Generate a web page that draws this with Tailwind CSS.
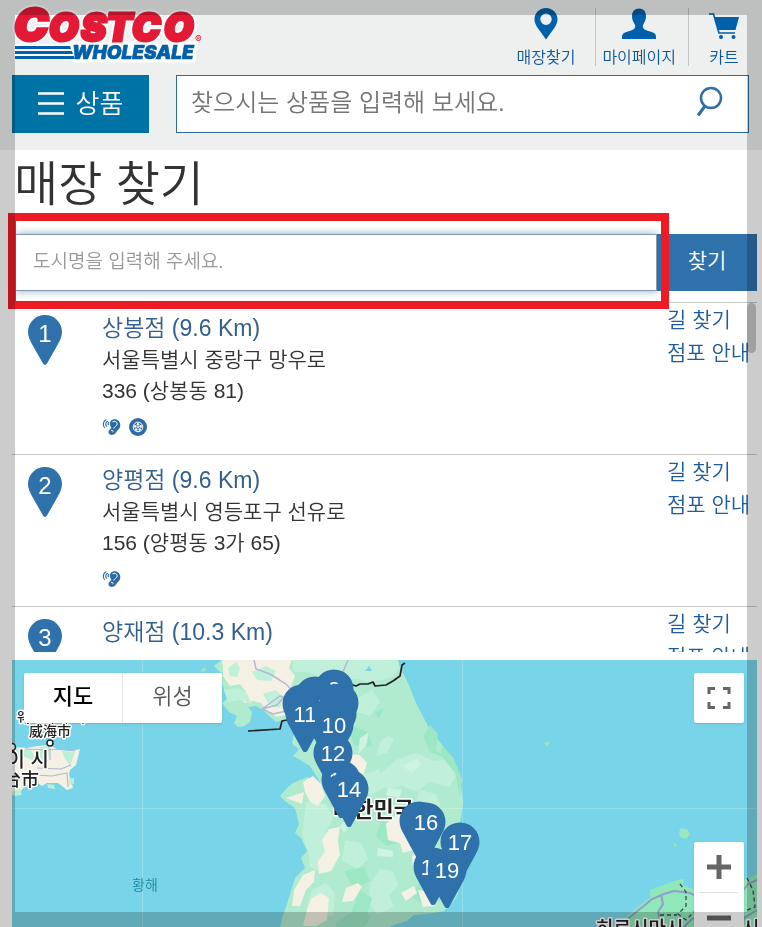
<!DOCTYPE html>
<html lang="ko">
<head>
    <meta charset="UTF-8">
    <meta name="viewport" content="width=device-width, initial-scale=1.0">
    <title>매장 찾기</title>
    <script src="https://cdn.jsdelivr.net/npm/@tailwindcss/browser@4"></script>
</head>
<body class="h-screen flex flex-col overflow-hidden bg-white text-[#333] font-[350] font-['Liberation_Sans','Noto_Sans_CJK_KR',sans-serif]">
    <svg class="hidden" aria-hidden="true">
        <symbol id="pin" viewBox="0 0 34 50">
            <path fill="#2f71aa" d="M17 0C7.600 0 0 7.500 0 17c0 4.500 2 8.500 4.500 13L15 48.500c1 1.900 3 1.900 4 0L29.500 30C32 25.500 34 21.500 34 17 34 7.500 26.400 0 17 0z"/>
        </symbol>
        <symbol id="map-pin" viewBox="-20 -20 40 60">
            <path fill="#2f71aa" d="M0-19.500C-11-19.500-19.500-11-19.500 0c0 5 2 9 4.500 13.500L-2.500 36.500c1 2 4 2 5 0L15 13.500C17.500 9 19.500 5 19.500 0 19.500-11 11-19.500 0-19.500z"/>
        </symbol>
        <symbol id="ear" viewBox="0 0 20 18">
            <g fill="none" stroke="#2f6ca5" stroke-width="1.200">
                <path d="M3 10C.3 7 1 3 4.500 1.200M5 8.500C3.200 6.500 3.600 4 6.200 2.600M7 7C6 6 6.200 4.800 7.500 4"/>
            </g>
            <path fill="#2f6ca5" d="M9 3c2-2.700 6.500-2.800 8.700-.3 2.500 3 1.800 7-.7 9.300-1.800 1.700-2.500 4.200-4.700 5-2.800 1-5.800-.3-5.400-3 .3-2 2-2.400 2.900-4.400C8.600 8 7.500 5.300 9 3z"/>
            <path fill="none" stroke="#fff" stroke-width="1" d="M11 3.600c2-1.300 4.800-.5 5 1.900.2 2.600-3 3-3.700 5.200M9.500 12.500c1.800-.3 2.700.7 1.800 2"/>
        </symbol>
        <symbol id="tire" viewBox="0 0 18 18">
            <circle cx="9" cy="9" r="9" fill="#2f6ca5"/>
            <circle cx="9" cy="9" r="4.800" fill="none" stroke="#fff" stroke-width="1"/>
            <g fill="#fff"><circle cx="9" cy="6.300" r="1.300"/><circle cx="6.300" cy="8.400" r="1.300"/><circle cx="11.700" cy="8.400" r="1.300"/><circle cx="7.300" cy="11.500" r="1.300"/><circle cx="10.700" cy="11.500" r="1.300"/><circle cx="9" cy="9" r="1"/></g>
        </symbol>
    </svg>

    <header class="bg-[#eeefef] pl-3 pr-[13px] h-[150px] shrink-0">
        <div class="flex justify-between items-start pt-1 h-[75px]">
            <a href="#" aria-label="Costco Wholesale">
                <svg class="w-[194px] h-[60px] font-['Inter'] font-black italic" viewBox="12 4 194 60">
                    <g fill="#fff" stroke="#fff" stroke-width="7" stroke-linejoin="round">
                        <use href="#wordmark"/>
                        <use href="#subline"/>
                    </g>
                    <path fill="#fff" d="M14 44h58l4 16H14z"/>
                    <g fill="#e31936" stroke="#e31936" stroke-width="3">
                        <g id="wordmark">
                            <text x="14" y="41" font-size="46">C</text>
                            <text x="49" y="41" font-size="38">O</text>
                            <text x="81" y="41" font-size="38">S</text>
                            <text x="106" y="41" font-size="38">T</text>
                            <text x="132" y="41" font-size="38">C</text>
                            <text x="164" y="41" font-size="38">O</text>
                        </g>
                    </g>
                    <g fill="#0060a9" stroke="#0060a9" stroke-width=".6">
                        <text id="subline" x="72" y="59" font-size="19">WHOLESALE</text>
                    </g>
                    <path fill="#0060a9" d="M15 46h55l1 3H15zM15 51h57l1 3H15zM15 56h59l1 3H15z"/>
                    <text x="195" y="43" font-size="10" fill="#e31936" class="font-normal not-italic">®</text>
                </svg>
            </a>
            <nav class="flex pt-1 pr-2.5 text-base leading-6 text-[#0d5699]">
                <a href="#" class="flex flex-col items-center gap-2 pr-5 h-[58px]">
                    <svg class="w-6 h-8 shrink-0" viewBox="0 0 24 32"><path fill="#0060a9" fill-rule="evenodd" d="M12 0C5.500 0 .5 5 .5 11.200c0 3 1.200 5.300 2.500 7.800l9 12.500L21 19c1.300-2.500 2.500-4.800 2.500-7.800C23.500 5 18.500 0 12 0zm0 5.500a5.700 5.700 0 1 1 0 11.400 5.700 5.700 0 0 1 0-11.400z"/></svg>
                    <span class="leading-5">매장찾기</span>
                </a>
                <a href="#" class="flex flex-col items-center gap-2 pl-1.5 pr-3 h-[58px] border-x border-[#c4c5c6]">
                    <svg class="w-[34px] h-8 shrink-0" viewBox="0 0 34 32"><path fill="#0060a9" d="M17 .5c-4.500 0-7 3-7 7.500 0 3 .8 5 2.300 7.500 1.500 2.500 1.200 5-1.300 6.200-3.500 1.500-7 1.800-9.300 3.500C.3 26.200 0 27.500 0 29v2h34v-2c0-1.500-.3-2.800-1.700-3.800-2.300-1.700-5.800-2-9.300-3.500-2.500-1.200-2.800-3.700-1.300-6.200C23.200 13 24 11 24 8c0-4.500-2.500-7.500-7-7.500z"/></svg>
                    <span class="leading-5">마이페이지</span>
                </a>
                <a href="#" class="flex flex-col items-center gap-2 pl-5 h-[58px]">
                    <svg class="w-[30px] h-8 shrink-0" viewBox="0 0 30 32"><path fill="none" stroke="#0060a9" stroke-width="1.700" d="M0 6h4.500L10 25h16"/><path fill="#0060a9" d="M5.500 9H30l-3.500 13H9z"/><circle cx="12" cy="29" r="2" fill="#0060a9"/><circle cx="24.500" cy="29" r="2" fill="#0060a9"/></svg>
                    <span class="leading-5">카트</span>
                </a>
            </nav>
        </div>
        <div class="flex gap-[27px] h-[58px]">
            <button class="w-[137px] bg-[#0073a6] text-white text-[26px] flex items-center justify-center gap-3">
                <svg class="w-[26px] h-6" viewBox="0 0 26 24"><path stroke="#fff" stroke-width="2.500" d="M0 1.500h26M0 11.500h26M0 21.500h26"/></svg>
                상품
            </button>
            <form class="flex flex-1 bg-white border border-[#2e6a98]">
                <input class="flex-1 min-w-0 px-3.5 pb-0.5 text-2xl placeholder:text-[#757575] outline-none" type="text" aria-label="상품 검색" placeholder="찾으시는 상품을 입력해 보세요.">
                <button type="button" class="px-6 pb-1" aria-label="검색">
                    <svg class="w-[28px] h-[32px]" viewBox="0 0 28 32"><g fill="none" stroke="#2f6ea8" stroke-width="2.500"><circle cx="15" cy="12" r="10"/><path stroke-width="3" d="M9 20L2 29.500"/></g></svg>
                </button>
            </form>
        </div>
    </header>

    <main class="flex flex-col flex-1 min-h-0 pl-3 pr-[5px]">
        <h1 class="h-[84px] pl-0.5 pt-0.5 text-[48px] leading-[66px]">매장 찾기</h1>
        <form class="relative z-10 flex h-[57px] shrink-0">
            <input class="flex-1 min-w-0 ml-[3px] px-[17px] text-[19px] bg-white border border-[#8b9aa8] shadow-[0_0_8px_#7fa9cc] placeholder:text-[#999] outline-none" type="text" aria-label="도시명" placeholder="도시명을 입력해 주세요.">
            <button type="button" class="w-[100px] pb-1 bg-[#2f71aa] text-white text-[21px]">찾기</button>
            <div class="absolute -left-1 right-[88px] -top-[21px] -bottom-[18px] border-8 border-[#ed1c24] pointer-events-none"></div>
        </form>

        <div class="relative mt-[11px] h-[350px] shrink-0 overflow-hidden">
            <ul>
                <li class="flex h-[152px] border-t border-[#c8c8c8] pl-4">
                    <div class="relative mt-3 w-[34px] h-[50px] text-center text-2xl leading-[38px] text-white">
                        <svg class="absolute inset-0 w-full h-full"><use href="#pin"/></svg>
                        <span class="relative">1</span>
                    </div>
                    <div class="ml-10 pt-2.5 flex-1 text-[21px] leading-[31px]">
                        <h2><a href="#" class="text-[23px] text-[#33608c]">상봉점 (9.6 Km)</a></h2>
                        <p>서울특별시 중랑구 망우로<br>336 (상봉동 81)</p>
                        <div class="flex gap-2 mt-3">
                            <svg class="w-[19px] h-[18px]"><use href="#ear"/></svg>
                            <svg class="w-[18px] h-[18px]"><use href="#tire"/></svg>
                        </div>
                    </div>
                    <div class="w-[90px] flex flex-col text-[21px] leading-[33px] text-[#1c5c9c]">
                        <a href="#">길 찾기</a>
                        <a href="#">점포 안내</a>
                    </div>
                </li>
                <li class="flex h-[152px] border-t border-[#c8c8c8] pl-4">
                    <div class="relative mt-3 w-[34px] h-[50px] text-center text-2xl leading-[38px] text-white">
                        <svg class="absolute inset-0 w-full h-full"><use href="#pin"/></svg>
                        <span class="relative">2</span>
                    </div>
                    <div class="ml-10 pt-2.5 flex-1 text-[21px] leading-[31px]">
                        <h2><a href="#" class="text-[23px] text-[#33608c]">양평점 (9.6 Km)</a></h2>
                        <p>서울특별시 영등포구 선유로<br>156 (양평동 3가 65)</p>
                        <div class="flex gap-2 mt-3">
                            <svg class="w-[19px] h-[18px]"><use href="#ear"/></svg>
                        </div>
                    </div>
                    <div class="w-[90px] flex flex-col text-[21px] leading-[33px] text-[#1c5c9c]">
                        <a href="#">길 찾기</a>
                        <a href="#">점포 안내</a>
                    </div>
                </li>
                <li class="flex h-[152px] border-t border-[#c8c8c8] pl-4">
                    <div class="relative mt-3 w-[34px] h-[50px] text-center text-2xl leading-[38px] text-white">
                        <svg class="absolute inset-0 w-full h-full"><use href="#pin"/></svg>
                        <span class="relative">3</span>
                    </div>
                    <div class="ml-10 pt-2.5 flex-1 text-[21px] leading-[31px]">
                        <h2><a href="#" class="text-[23px] text-[#33608c]">양재점 (10.3 Km)</a></h2>
                    </div>
                    <div class="w-[90px] flex flex-col text-[21px] leading-[33px] text-[#1c5c9c]">
                        <a href="#">길 찾기</a>
                        <a href="#">점포 안내</a>
                    </div>
                </li>
            </ul>
            <div class="absolute right-px top-px w-[9px] h-[50px] rounded-full bg-[#c9c9c9] mix-blend-multiply"></div>
        </div>

        <section class="relative mt-2 flex-1 min-h-0 overflow-hidden bg-[#78d4e8]">
            <svg class="w-full h-full font-['Noto_Sans_CJK_KR',sans-serif]" viewBox="12 660 745 267" preserveAspectRatio="xMidYMid slice">
                <!-- Korean peninsula -->
                <path fill="#b0ebcf" d="M222 660l-8 6 7 7 1 10 2 7 4 8-6 5 7 9 8 4-3 7 4 4 6-1 6-4 2-10-4-5 8-1 8 5 12 11 10-3 8 14-2 11 7 5-6 7 9 5 8 5 4 6 6 10-2 3-10-8-8 3-7 3-5 4-8 9 5 5 10 7 4 16-4 9 6 5 6 13-6 7 4 10-10 10-3 10-5 16-5 14-2 10h107l10-4 10-3 7-6 13-1 17-3 10-10 4-7 2-11v-60l3-20-2-17-5-17-13-23-14-18-13-25-8-20-7-14v-3z"/>
                <path fill="#f4f0e4" d="M222 660h70l-3 8 6 8-4 10 3 12-5 16-12 3-10-6-6-8-8-2-8 2-7-6 8-5-6-8-10 2-7-10 0-9z"/>
                <path fill="#c1f0da" d="M228 668l8-6 4 6-3 9-7-1zM252 672l14-6 10 5-5 10-14-1zM224 690l14-2 9 6 5 10-11-4-13 2zM263 694l12-4 8 6-3 12-11-3z"/>
                <path fill="#c1f0da" d="M292 660h106l2 8-9 10-21 4-14-3-30 1-18-8-14 0zM358 698l14-8 8 12-10 14-12-4zM380 742l8-6 6 3-7 14-11 3zM396 760l20-7 18 8 16-2 8 15-9 13-20-5-12 10-16-7-12 5-14-12zM352 768l14 6 13-5 6 18-13 8-18-10zM306 802l20 2 7 14-8 15 8 18-9 22-14-6-2-16-6-16zM371 882l9-13 13 2 5 14-9 11 5 10-17 9-9-14zM312 890l14-7 9 10-2 22-15 4-12-10zM420 790l16 4 5 12-14 7-12-10zM345 840l16 3 7 16-10 10-16-8z"/>
                <path fill="#9ce8c5" d="M375 713l9-5-5 11zM347 724l22 8 3 15-18-2zM382 820l18 8 2 14-16 4-10-10zM344 871l20-4 6 14-16 8zM420 880l14 5 8 14-14 8-16-10zM430 725l8 9-2 16 10 8-16-6-7-16zM360 890l12 8-5 16-16 0zM336 922l20-12 16 6-8 11h-28zM442 745l12 14 8 20-2 18-5-24-14-18z"/>
                <path fill="#cdf3e1" d="M360 738l9-6-3 14-8 8zM403 766l14-8 4 7-10 8zM388 788l14 2-3 8-13-3zM340 826l7-8 2 8-5 7zM378 848l15 3 0 6-16-1z"/>
                <path fill="#f4f0e4" d="M350 754l10 1 7 8-3 10-10 2-6-10zM303 782l10-6 8 8 4 12-7 10-8-4-5-10zM286 798l18-6-2 12-8-3zM329 829l11-2-2 14 2 14-9 16-12 3-1-13 7-9-3-12zM303 875l12-5-1 12-8 8-6 16-8 0 2-16zM346 888l12-5 4 4-9 14-11 1zM311 899l10-6 8 5-2 22-11 6h-13l4-16zM386 824l12-10 17 10-2 26-10 3-3-10-12-3zM412 856l8-6 8 6 4 14-13 8-6-10zM401 893l13-7 3 7-11 8zM418 890l14 2 3 14-12 1z"/>
                <path fill="#dfe8e2" d="M434 850l8-2 4 8-8 3z"/>
                <path fill="none" stroke="#b5b9d2" stroke-width="1.500" d="M254 660l2 9 14 5 16 10 10 10M348 660l-5 12M262 709l18-13 8 3-1 12-14 3zM262 709l15-4 8-9"/>
                <path fill="#78d4e8" d="M365 671l4-5 3 5zM291 723l6 7-5 2z"/>
                <path fill="none" stroke="#222" stroke-width="1.700" stroke-linejoin="round" d="M248 731l32-2 2-8 10-2M350 684l6 2 4-2 8 0 5-2 2 4 11-1 7-4 7-5 2-11 3-2"/>
                <!-- China -->
                <path fill="#f4f0e4" d="M12 747l15 1 10-2 13-1 8 5 13 1 9-2-4 16-6 5-1 4 4 14-6 2-9-7-11 0-5 3-8-6-10 7-5 7-7 1z"/>
                <path fill="#bcefd6" d="M14 748l17 2 6 12-12-5-13 3zM40 747l10-1-2 12-8 9zM62 751l13 1-5 14-6-9zM12 792l8-4 2 7-8 1zM69 779l5-1v6l-5 1zM47 784l7 1 1 4-7-1z"/>
                <path fill="none" stroke="#b5b9d2" stroke-width="1.200" d="M25 749l22 1 15-1 13 2M50 748v12M37 768l24 1 10-4M35 775l17 1 15-3 1 14"/>
                <!-- Japan and small islands -->
                <path fill="#90e7ba" d="M613 927l15-12 12-10 10-7v-8l27-10 7-1-1 6 12 5 50-10 12-6v53z"/>
                <path fill="none" stroke="#8f9fc9" stroke-width="2" d="M620 925l20-16 12-10 12-5 10-3 16 2 12 6M661 894l2 10-5 8 4 15M740 895l8-11 9-4M742 927l2-9 13-8M684 927l8-8 10-3"/>
                <path fill="none" stroke="#3c4a48" stroke-width="1.300" stroke-dasharray="4 3" d="M680 884l6 8v14l-8 8 8 6 10-10M660 915h17M747 878l6 12 2 17-10 4"/>
                <path fill="#97e8bf" d="M544 743l6-2-3 6zM681 828l6 1 3 5-4 5-6-2-1-5zM674 843l3 2-3 2zM202 669l3-2 1 4-5 1z"/>
                <path stroke="#fff" stroke-opacity=".2" d="M142.500 660v267M462.500 660v267M12 808.500h745"/>
                <g fill="#222" stroke="#fff" stroke-width="3" stroke-linejoin="round" paint-order="stroke" font-weight="500">
                    <text x="17" y="722" font-size="14">웨이하이 시</text>
                    <text x="29" y="736" font-size="14">威海市</text>
                    <text x="49" y="767" font-size="20" text-anchor="end">옌타이 시</text>
                    <text x="39" y="786" font-size="18" text-anchor="end">烟台市</text>
                    <text x="333" y="817" font-size="22" font-weight="700">대한민국</text>
                    <text x="596" y="935" font-size="19">히로시마시</text>
                    <text x="742" y="935" font-size="19">시</text>
                </g>
                <g fill="#fff" stroke="#222" stroke-width="1.500">
                    <circle cx="50" cy="743" r="3"/>
                    <circle cx="12" cy="747" r="3.500"/>
                </g>
                <text x="132" y="890" font-size="14" fill="#19899b">황해</text>
                <g id="pins" class="font-['Liberation_Sans']" font-size="22" fill="#fff" text-anchor="middle"></g>
            </svg>
            <div class="absolute left-3 top-[13px] flex h-[50px] rounded-xs bg-white shadow text-[22px]">
                <button class="w-[98px] pb-1 font-medium text-black">지도</button>
                <button class="w-[100px] pb-1 text-[#565656] border-l border-[#e3e3e3]">위성</button>
            </div>
            <button class="absolute right-[13px] top-[13px] size-[50px] flex items-center justify-center rounded-xs bg-white shadow" aria-label="전체 화면">
                <svg class="size-6" viewBox="0 0 24 24"><path fill="none" stroke="#666" stroke-width="3" d="M2 8V2.500h6M16 2.500h6V8M22 16v5.500h-6M8 21.500H2V16"/></svg>
            </button>
            <div class="absolute right-[13px] top-[182px] w-[50px] rounded-xs bg-white shadow">
                <button class="w-full h-[50px] flex items-center justify-center" aria-label="확대">
                    <svg class="size-6" viewBox="0 0 24 24"><path stroke="#666" stroke-width="5" d="M0 12h24M12 0v24"/></svg>
                </button>
                <div class="mx-1.5 h-px bg-[#e0e0e0]"></div>
                <button class="w-full h-[50px] flex items-center justify-center" aria-label="축소">
                    <svg class="size-6" viewBox="0 0 24 24"><path stroke="#666" stroke-width="5" d="M0 12h24"/></svg>
                </button>
            </div>
        </section>
    </main>

    <div class="fixed inset-0 z-20 border-[15px] border-black/20 pointer-events-none"></div>

    <script>
        // [number, x, y] of each store marker, later ones lie on top
        const stores = [
            [2, 334, 689], [5, 315, 696], [8, 302, 704], [4, 319, 706], [6, 339, 703], [7, 337, 714],
            [11, 305, 714], [10, 334, 725], [12, 333, 753], [13, 341, 780], [14, 349, 789],
            [15, 419, 821], [16, 426, 822], [17, 460, 842], [18, 433, 867], [19, 447, 870]
        ];
        document.getElementById('pins').innerHTML = stores.map(([n, x, y]) =>
            `<use href="#map-pin" x="${x - 20}" y="${y - 20}" width="40" height="60"/><text x="${x}" y="${y + 8}">${n}</text>`
        ).join('');
    </script>
</body>
</html>
